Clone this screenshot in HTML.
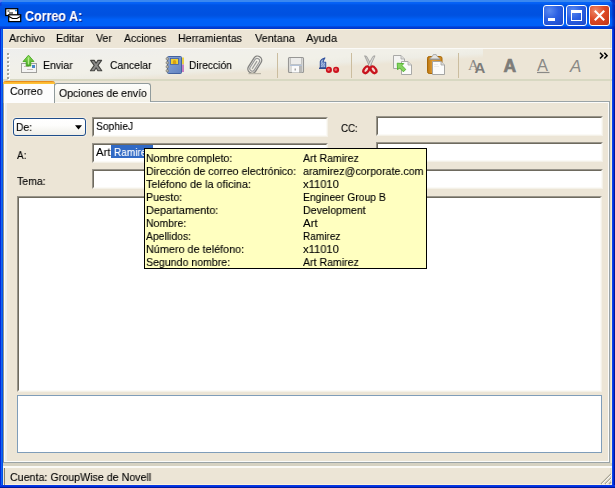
<!DOCTYPE html>
<html><head><meta charset="utf-8">
<style>
*{box-sizing:border-box;margin:0;padding:0}
html,body{width:615px;height:488px;overflow:hidden;background:#ece5d6}
body{font-family:"Liberation Sans",sans-serif;font-size:11px;color:#000;position:relative}
.a{position:absolute}
.tx{position:absolute;white-space:nowrap;transform-origin:0 0;will-change:transform;-webkit-text-stroke:0.120px currentColor}
.inp{position:absolute;background:#fff;border-top:1px solid #98948a;border-left:1px solid #98948a;border-right:1px solid #f4f1e8;border-bottom:1px solid #f4f1e8}
.inp i{position:absolute;left:0;top:0;right:0;bottom:0;border-top:1px solid #6e6a5e;border-left:1px solid #6e6a5e;border-right:1px solid #fbfaf6;border-bottom:1px solid #fbfaf6}
.btn{position:absolute;top:5px;width:21px;height:21px;border:1px solid #fff;border-radius:3px}
.sep{position:absolute;top:53px;width:1px;height:25px;background:#cbbd9f}
</style></head><body>
<!-- window frame -->
<div class="a" style="left:0;top:0;width:615px;height:488px;background:#0a32dc"></div>
<div class="a" style="left:3px;top:29px;width:609px;height:456px;background:#ece5d6"></div>
<!-- title bar -->
<div class="a" style="left:0;top:0;width:615px;height:29px;background:linear-gradient(to bottom,#3a88f0 0px,#3a88f0 1.500px,#0663f6 2.500px,#0560f4 3.500px,#0054e4 5px,#0051e0 15px,#0057e8 17px,#0060f8 19.500px,#0060f8 25.500px,#0240d6 27px,#0036cc 29px)"></div><div class="a" style="left:3px;top:29px;width:609px;height:1px;background:#fcf1da"></div>
<div class="a" style="left:0;top:29px;width:3px;height:459px;background:linear-gradient(to right,#0426dc 0,#0426dc 1px,#1066f0 1px,#1066f0 2px,#0352e6 2px)"></div>
<div class="a" style="left:610px;top:30px;width:1px;height:455px;background:#dedcc8"></div><div class="a" style="left:611px;top:30px;width:1px;height:455px;background:#f2e9d2"></div><div class="a" style="left:612px;top:29px;width:3px;height:459px;background:linear-gradient(to right,#0a44e8 0,#0a44e8 1px,#0030dc 1px,#0030dc 2px,#00149c 2px)"></div>
<div class="a" style="left:3px;top:484px;width:609px;height:1px;background:#fcf1da"></div><div class="a" style="left:0;top:485px;width:615px;height:3px;background:linear-gradient(to bottom,#0838e4 0,#0838e4 1px,#0030dc 1px,#0030dc 2px,#00189c 2px)"></div>
<div class="a" style="left:612px;top:3px;width:3px;height:26px;background:linear-gradient(to right,rgba(0,40,200,.35),rgba(0,20,150,.75))"></div>
<svg class="a" style="left:0;top:0" width="615" height="6" viewBox="0 0 615 6"><path d="M0 0h3L0 3z" fill="#5c7cf0"/><path d="M0 3v3h1.500V2z" fill="#0a3ee0"/><path d="M615 0h-4.500L615 4.500z" fill="#0a2cb4"/><path d="M610.500 0l4.500 4.500" stroke="#0838c8" stroke-width="1.200"/></svg>
<!-- title icon -->
<svg class="a" style="left:4px;top:7px" width="19" height="17" viewBox="0 0 19 17">
 <rect x="1.700" y="1.700" width="12" height="6.800" fill="#fff" stroke="#000" stroke-width="1.250"/>
 <path d="M3.500 4h2M5 6h4" stroke="#000" stroke-width="1"/>
 <rect x="11" y="2.500" width="2" height="1.800" fill="#2a8ae0"/>
 <rect x="4.700" y="7.800" width="12" height="6.800" fill="#fff" stroke="#000" stroke-width="1.250"/>
 <path d="M5 9.500l3.500 2h4.400l3.500-2" stroke="#000" fill="none" stroke-width="1.100"/>
</svg>
<!-- caption buttons -->
<div class="btn" style="left:543px;background:radial-gradient(circle at 30% 25%,#5b8af0 0%,#2b5fe2 45%,#1d48c8 100%)"><div class="a" style="left:4px;top:12px;width:7px;height:3px;background:#fff"></div></div>
<div class="btn" style="left:566px;background:radial-gradient(circle at 30% 25%,#5b8af0 0%,#2b5fe2 45%,#1d48c8 100%)"><div class="a" style="left:4px;top:4px;width:11px;height:11px;border:1px solid #fff;border-top:3px solid #fff"></div></div>
<div class="btn" style="left:589px;background:radial-gradient(circle at 30% 25%,#ee8a6a 0%,#de4a26 45%,#c03414 100%)">
 <svg class="a" style="left:3px;top:3px" width="13" height="13" viewBox="0 0 13 13"><path d="M1.800 1.800l9.400 9.400M11.200 1.800l-9.400 9.400" stroke="#fff" stroke-width="2.100"/></svg>
</div>

<!-- toolbar -->
<div class="a" style="left:3px;top:48px;width:609px;height:1px;background:#fbfaf7"></div>
<div class="a" style="left:3px;top:49px;width:480px;height:30px;background:linear-gradient(to bottom right,#eeeeed 0%,#f1f0ea 30%,#f1f0e8 48%,#eeede5 57%,#ece5d6 65%,#ece5d6 100%)"></div>
<div class="a" style="left:3px;top:79px;width:609px;height:2px;background:#d8d8c2"></div>
<!-- gripper -->
<div class="a" style="left:8px;top:54px;width:2px;height:26px;background:repeating-linear-gradient(to bottom,#fff 0,#fff 2px,transparent 2px,transparent 4px)"></div><div class="a" style="left:7px;top:53px;width:2px;height:26px;background:repeating-linear-gradient(to bottom,#a3a39b 0,#a3a39b 2px,transparent 2px,transparent 4px)"></div>
<div class="sep" style="left:277px"></div>
<div class="sep" style="left:351px"></div>
<div class="sep" style="left:458px"></div>
<svg class="a" style="left:0;top:0" width="615" height="100" viewBox="0 0 615 100">
<defs>
 <linearGradient id="gA" x1="0" y1="0" x2="0" y2="1"><stop offset="0" stop-color="#8fe05a"/><stop offset="1" stop-color="#3da11e"/></linearGradient>
 <linearGradient id="gB" x1="0" y1="0" x2="1" y2="1"><stop offset="0" stop-color="#86a4d8"/><stop offset="1" stop-color="#6283c0"/></linearGradient>
<linearGradient id="gP" x1="0" y1="0" x2="1" y2="0"><stop offset="0" stop-color="#bd7509"/><stop offset="0.350" stop-color="#dd9d3c"/><stop offset="1" stop-color="#c8851f"/></linearGradient>
</defs>
<!-- Enviar: envelope + green arrow -->
<rect x="21.500" y="63.500" width="15" height="9" fill="#f4f4f3" stroke="#a0a09d" stroke-width="1"/>
<path d="M24 66.500h5M27 69.500h6" stroke="#c5b8b4" stroke-width="1"/>
<rect x="32" y="65" width="3" height="3" fill="#4a86c8"/>
<path d="M28.500 55.200L34 61.500H30.800V66H26.200V61.500H23Z" fill="url(#gA)" stroke="#4aa824" stroke-width="0.900" stroke-linejoin="round"/>
<path d="M28.500 57.500v7" stroke="#b4ec8c" stroke-width="1.400"/>
<!-- Cancel X -->
<path d="M90.600 60.400h3.700l1.800 2.800 1.800-2.800h3.700l-3.600 5 3.800 5.400h-3.900l-1.800-3-1.800 3h-3.900l3.800-5.400z" fill="#8b8b89" stroke="#444442" stroke-width="1.100" stroke-linejoin="round"/>
<!-- Address book -->
<rect x="167.500" y="56.500" width="14" height="17" rx="1" fill="url(#gB)" stroke="#43629f" stroke-width="1"/>
<rect x="182" y="57.500" width="2" height="7" fill="#e8d048"/>
<rect x="182" y="64.500" width="2" height="7.500" fill="#c880c0"/>
<rect x="170.500" y="58.500" width="8" height="6" fill="#f2d230" stroke="#3f5fa8" stroke-width="0.800"/>
<path d="M172.800 64v-2.300a1.700 1.700 0 0 1 3.400 0V64z" fill="#d8a010"/>
<g fill="#b8b8b0" stroke="#77776f" stroke-width="0.700"><circle cx="167.300" cy="58.800" r="1.300"/><circle cx="167.300" cy="62.800" r="1.300"/><circle cx="167.300" cy="66.800" r="1.300"/><circle cx="167.300" cy="70.800" r="1.300"/></g>
<!-- Paperclip -->
<g transform="rotate(32 254.800 64.600)" fill="none">
 <rect x="250.600" y="55.300" width="8.400" height="18.600" rx="4.200" stroke="#828280" stroke-width="1.350"/>
 <rect x="252.300" y="57.800" width="5" height="14" rx="2.500" stroke="#98989a" stroke-width="1.100"/>
 <path d="M254.800 60.500v9" stroke="#9a9a98" stroke-width="1.200"/>
</g>
<path d="M248.500 73.600h12.500" stroke="#b9b4a6" stroke-width="1.200"/>
<!-- Disk (disabled) -->
<rect x="288.500" y="57.500" width="15" height="15" rx="1" fill="#dcdcda" stroke="#979795" stroke-width="1.100"/>
<rect x="291" y="58" width="10" height="6" fill="#ececea"/>
<path d="M290.500 58v6.500h11V58" fill="none" stroke="#bcbcba" stroke-width="0.800"/>
<path d="M290 65.300h12" stroke="#a9bcd8" stroke-width="1"/>
<rect x="292" y="66" width="7" height="6.500" fill="#fafafa"/>
<rect x="299" y="66" width="3" height="6.500" fill="#b9b9b7"/>
<rect x="294.500" y="68.500" width="1.500" height="2" fill="#a6a6a4"/>
<!-- Spell -->
<path d="M320.300 67.800V61.600Q320.600 59.300 324.900 57.900Q323.300 60 323.200 62L325.700 62.200V67.800Z" fill="#a4badf" stroke="#35549e" stroke-width="1.100" stroke-linejoin="round"/>
<path d="M321.500 66l3-4M321.500 63.500l2-3M322.800 67l2.200-3" stroke="#5f7fbe" stroke-width="0.700"/>
<path d="M319 68.300h7.300" stroke="#27448e" stroke-width="1.300"/>
<circle cx="328.900" cy="69.900" r="3.050" fill="#cc121e"/><circle cx="336.100" cy="69.900" r="3.050" fill="#cc121e"/>
<circle cx="328.600" cy="69.600" r="1.300" fill="#e86c70"/><circle cx="335.800" cy="69.600" r="1.300" fill="#e86c70"/>
<!-- Scissors -->
<path d="M364.600 55.800l2 .500 5.600 10.200-2.200 1.200z" fill="#c9c9c7" stroke="#8f8f8d" stroke-width="0.700"/>
<path d="M375 55.800l-2 .500-5.600 10.200 2.200 1.200z" fill="#dcdcda" stroke="#8f8f8d" stroke-width="0.700"/>
<ellipse cx="366.300" cy="69.800" rx="2.300" ry="3.700" transform="rotate(38 366.300 69.800)" fill="#f4d8d0" stroke="#c8141e" stroke-width="2.300"/>
<ellipse cx="373.500" cy="69.800" rx="2.300" ry="3.700" transform="rotate(-38 373.500 69.800)" fill="#f4d8d0" stroke="#c8141e" stroke-width="2.300"/>
<!-- Copy -->
<path d="M393.500 55.500h7.500l3.500 3.500v9.500h-11z" fill="#f4f4f2" stroke="#a9a9a7" stroke-width="1"/>
<path d="M401 55.500v3.500h3.500" fill="#dcdcda" stroke="#a9a9a7" stroke-width="0.800"/>
<path d="M401.500 61.500h6.500l3.500 3.500v9.500h-10z" fill="#fbfbfa" stroke="#a9a9a7" stroke-width="1"/>
<path d="M408 61.500v3.500h3.500" fill="#dcdcda" stroke="#a9a9a7" stroke-width="0.800"/>
<path d="M397.200 63.200l6.600 .4-1.900 1.900 3.900 3.900-2.400 2.400-3.900-3.900-1.900 1.900z" fill="#86d460" stroke="#4fb02c" stroke-width="0.900"/>
<!-- Paste -->
<rect x="427.500" y="56.500" width="14.500" height="17" rx="1.800" fill="url(#gP)" stroke="#a86808" stroke-width="1"/>
<path d="M429.700 59.300c0-1.500 2.800-2 3.600-4.700h2.900c.8 2.700 3.600 3.200 3.600 4.700z" fill="#e4e4e2" stroke="#9e9e9c" stroke-width="0.800"/>
<path d="M429.500 59.200h10.500" stroke="#8e8e8c" stroke-width="1"/>
<path d="M432.500 61.500h8.500l3.500 3.500v9.500h-12z" fill="#fbfbfa" stroke="#a5a5a3" stroke-width="1"/>
<path d="M441 61.500v3.500h3.500" fill="#d8d8d6" stroke="#a5a5a3" stroke-width="0.800"/>
<path d="M434 64.500h4M434 66.500h5" stroke="#e6e6e4" stroke-width="0.800"/>
<!-- Font icons -->
<g font-family="Liberation Serif, serif" fill="#8a8986"><text x="468" y="69.500" font-size="15">A</text></g>
<g font-family="Liberation Sans, sans-serif" fill="#7d7c79">
 <text x="474.500" y="73" font-size="15" font-weight="bold">A</text>
 <text x="503.500" y="71.500" font-size="17.500" font-weight="bold" stroke="#7d7c79" stroke-width="0.700">A</text>
 <text x="537" y="70.500" font-size="16.500" fill="#8a8986">A</text>
 <text x="570" y="71.500" font-size="17" font-style="italic" fill="#8a8986">A</text>
</g>
<path d="M537 72.500h12.500" stroke="#8a8986" stroke-width="1.200"/>
<!-- chevron -->
<path d="M600 52.800l2.800 2.900-2.800 2.900M604.300 52.800l2.800 2.900-2.800 2.900" fill="none" stroke="#000" stroke-width="1.500"/>
</svg>


<!-- tab panel -->
<div class="a" style="left:3px;top:101px;width:607px;height:362px;border:1px solid #9aa3a6;border-left-color:#8f948f;background:#fcfcfa"></div>
<div class="a" style="left:5px;top:103px;width:2px;height:358px;background:#eeeeee"></div><div class="a" style="left:7px;top:103px;width:601px;height:358px;background:#ece5d6"></div>
<!-- tabs -->
<div class="a" style="left:54px;top:83px;width:97px;height:19px;background:linear-gradient(to bottom,#fdfdfb,#f3f1e8);border:1px solid #919b9c;border-bottom:none;border-radius:3px 3px 0 0"></div>
<div class="a" style="left:3px;top:81px;width:52px;height:22px;background:#fdfdfd;border-left:1px solid #a9adaa;border-right:1px solid #919b9c;border-radius:3px 3px 0 0"></div>
<div class="a" style="left:3px;top:81px;width:52px;height:3px;background:linear-gradient(to bottom,#e88c1c 0,#e88c1c 1px,#fbb42c 1px,#fdc63c 3px);border-radius:3px 3px 0 0"></div>

<!-- Fields -->
<div class="a" style="left:13px;top:118px;width:73px;height:18px;background:linear-gradient(to bottom,#fff 0%,#fdfdfc 40%,#efeee8 100%);border:1px solid #1f4e8c;border-radius:3px;box-shadow:0 0 0 1px rgba(255,255,255,.35)"></div>
<svg class="a" style="left:74px;top:124px" width="10" height="7" viewBox="0 0 10 7"><path d="M1 1.300h7l-3.500 4.200z" fill="#000"/></svg>

<div class="inp" style="left:92px;top:117px;width:236px;height:20px"><i></i></div>
<div class="inp" style="left:92px;top:143px;width:236px;height:20px"><i></i></div>
<div class="inp" style="left:92px;top:169px;width:236px;height:20px"><i></i></div>
<div class="a" style="left:111px;top:145px;width:42px;height:13px;background:#316ac5"></div>
<div class="inp" style="left:376px;top:116px;width:227px;height:20px"><i></i></div>
<div class="inp" style="left:376px;top:142px;width:227px;height:20px"><i></i></div>
<div class="inp" style="left:376px;top:169px;width:227px;height:20px"><i></i></div>

<div class="inp" style="left:17px;top:196px;width:585px;height:196px"><i></i></div>
<div class="a" style="left:17px;top:395px;width:585px;height:58px;background:#fff;border:1px solid #7f9db9"></div>

<!-- status -->
<div class="a" style="left:3px;top:463px;width:609px;height:3px;background:#d6d2c2"></div>
<div class="a" style="left:3px;top:466px;width:609px;height:2px;background:#fbfaf6"></div>
<div class="a" style="left:4px;top:468px;width:1px;height:17px;background:#85816f"></div>
<svg class="a" style="left:599px;top:472px" width="13" height="13" viewBox="0 0 13 13"><path d="M12 2L2 12M12 6L6 12M12 10L10 12" stroke="#a8a494" stroke-width="1.300"/><path d="M13 2L3 12M13 6L7 12" stroke="#fff" stroke-width="0.800"/></svg>

<div class="tx" style="left:24.8px;top:7.91px;font-size:14.2px;line-height:16.33px;color:#fff;font-weight:bold;transform:scaleX(0.8813);text-shadow:1px 1px 0 #0a1f8a;">Correo A:</div>
<div class="tx" style="left:8.6px;top:32.41px;font-size:11.5px;line-height:13.22px;color:#000;font-weight:normal;transform:scaleX(0.9359);">Archivo</div>
<div class="tx" style="left:56.3px;top:32.41px;font-size:11.5px;line-height:13.22px;color:#000;font-weight:normal;transform:scaleX(0.9319);">Editar</div>
<div class="tx" style="left:96.2px;top:32.41px;font-size:11.5px;line-height:13.22px;color:#000;font-weight:normal;transform:scaleX(0.9151);">Ver</div>
<div class="tx" style="left:124.0px;top:32.41px;font-size:11.5px;line-height:13.22px;color:#000;font-weight:normal;transform:scaleX(0.9042);">Acciones</div>
<div class="tx" style="left:178.4px;top:32.41px;font-size:11.5px;line-height:13.22px;color:#000;font-weight:normal;transform:scaleX(0.9257);">Herramientas</div>
<div class="tx" style="left:254.5px;top:32.41px;font-size:11.5px;line-height:13.22px;color:#000;font-weight:normal;transform:scaleX(0.9451);">Ventana</div>
<div class="tx" style="left:306.3px;top:32.41px;font-size:11.5px;line-height:13.22px;color:#000;font-weight:normal;transform:scaleX(0.9597);">Ayuda</div>
<div class="tx" style="left:43.2px;top:59.41px;font-size:11.5px;line-height:13.22px;color:#000;font-weight:normal;transform:scaleX(0.9138);">Enviar</div>
<div class="tx" style="left:110.3px;top:59.41px;font-size:11.5px;line-height:13.22px;color:#000;font-weight:normal;transform:scaleX(0.9016);">Cancelar</div>
<div class="tx" style="left:189.4px;top:59.41px;font-size:11.5px;line-height:13.22px;color:#000;font-weight:normal;transform:scaleX(0.8949);">Dirección</div>
<div class="tx" style="left:10.4px;top:85.41px;font-size:11.5px;line-height:13.22px;color:#000;font-weight:normal;transform:scaleX(0.9273);">Correo</div>
<div class="tx" style="left:58.5px;top:87.41px;font-size:11.5px;line-height:13.22px;color:#000;font-weight:normal;transform:scaleX(0.9165);">Opciones de envío</div>
<div class="tx" style="left:16.4px;top:121.41px;font-size:11.5px;line-height:13.22px;color:#000;font-weight:normal;transform:scaleX(0.8991);">De:</div>
<div class="tx" style="left:95.6px;top:120.41px;font-size:11.5px;line-height:13.22px;color:#000;font-weight:normal;transform:scaleX(0.8926);">SophieJ</div>
<div class="tx" style="left:340.8px;top:122.41px;font-size:11.5px;line-height:13.22px;color:#000;font-weight:normal;transform:scaleX(0.8479);">CC:</div>
<div class="tx" style="left:16.6px;top:149.41px;font-size:11.5px;line-height:13.22px;color:#000;font-weight:normal;transform:scaleX(0.8644);">A:</div>
<div class="tx" style="left:95.6px;top:146.41px;font-size:11.5px;line-height:13.22px;color:#000;font-weight:normal;transform:scaleX(0.9794);">Art</div>
<div class="tx" style="left:113.6px;top:146.41px;font-size:11.5px;line-height:13.22px;color:#fff;font-weight:normal;transform:scaleX(0.8736);">Ramirez</div>
<div class="tx" style="left:17.0px;top:175.41px;font-size:11.5px;line-height:13.22px;color:#000;font-weight:normal;transform:scaleX(0.9129);">Tema:</div>
<div class="tx" style="left:10.4px;top:471.41px;font-size:11.5px;line-height:13.22px;color:#000;font-weight:normal;transform:scaleX(0.9287);">Cuenta: GroupWise de Novell</div>

<!-- tooltip -->
<div class="a" style="left:144px;top:148px;width:283px;height:121px;background:#ffffc0;border:1px solid #000"></div>
<div class="tx" style="left:146.4px;top:152.41px;font-size:11.5px;line-height:13.22px;color:#000;font-weight:normal;transform:scaleX(0.9184);">Nombre completo:</div>
<div class="tx" style="left:146.4px;top:165.41px;font-size:11.5px;line-height:13.22px;color:#000;font-weight:normal;transform:scaleX(0.9282);">Dirección de correo electrónico:</div>
<div class="tx" style="left:146.4px;top:178.41px;font-size:11.5px;line-height:13.22px;color:#000;font-weight:normal;transform:scaleX(0.9429);">Teléfono de la oficina:</div>
<div class="tx" style="left:146.4px;top:191.41px;font-size:11.5px;line-height:13.22px;color:#000;font-weight:normal;transform:scaleX(0.9282);">Puesto:</div>
<div class="tx" style="left:146.4px;top:204.41px;font-size:11.5px;line-height:13.22px;color:#000;font-weight:normal;transform:scaleX(0.9517);">Departamento:</div>
<div class="tx" style="left:146.4px;top:217.41px;font-size:11.5px;line-height:13.22px;color:#000;font-weight:normal;transform:scaleX(0.9114);">Nombre:</div>
<div class="tx" style="left:146.4px;top:230.41px;font-size:11.5px;line-height:13.22px;color:#000;font-weight:normal;transform:scaleX(0.9023);">Apellidos:</div>
<div class="tx" style="left:146.4px;top:243.41px;font-size:11.5px;line-height:13.22px;color:#000;font-weight:normal;transform:scaleX(0.9424);">Número de teléfono:</div>
<div class="tx" style="left:146.4px;top:256.41px;font-size:11.5px;line-height:13.22px;color:#000;font-weight:normal;transform:scaleX(0.9198);">Segundo nombre:</div>
<div class="tx" style="left:302.6px;top:152.41px;font-size:11.5px;line-height:13.22px;color:#000;font-weight:normal;transform:scaleX(0.9192);">Art Ramirez</div>
<div class="tx" style="left:302.6px;top:165.41px;font-size:11.5px;line-height:13.22px;color:#000;font-weight:normal;transform:scaleX(0.9275);">aramirez@corporate.com</div>
<div class="tx" style="left:302.6px;top:178.41px;font-size:11.5px;line-height:13.22px;color:#000;font-weight:normal;transform:scaleX(0.9731);">x11010</div>
<div class="tx" style="left:302.6px;top:191.41px;font-size:11.5px;line-height:13.22px;color:#000;font-weight:normal;transform:scaleX(0.8983);">Engineer Group B</div>
<div class="tx" style="left:302.6px;top:204.41px;font-size:11.5px;line-height:13.22px;color:#000;font-weight:normal;transform:scaleX(0.9252);">Development</div>
<div class="tx" style="left:302.6px;top:217.41px;font-size:11.5px;line-height:13.22px;color:#000;font-weight:normal;transform:scaleX(0.9930);">Art</div>
<div class="tx" style="left:302.6px;top:230.41px;font-size:11.5px;line-height:13.22px;color:#000;font-weight:normal;transform:scaleX(0.8736);">Ramirez</div>
<div class="tx" style="left:302.6px;top:243.41px;font-size:11.5px;line-height:13.22px;color:#000;font-weight:normal;transform:scaleX(0.9731);">x11010</div>
<div class="tx" style="left:302.6px;top:256.41px;font-size:11.5px;line-height:13.22px;color:#000;font-weight:normal;transform:scaleX(0.9192);">Art Ramirez</div>
</body></html>
